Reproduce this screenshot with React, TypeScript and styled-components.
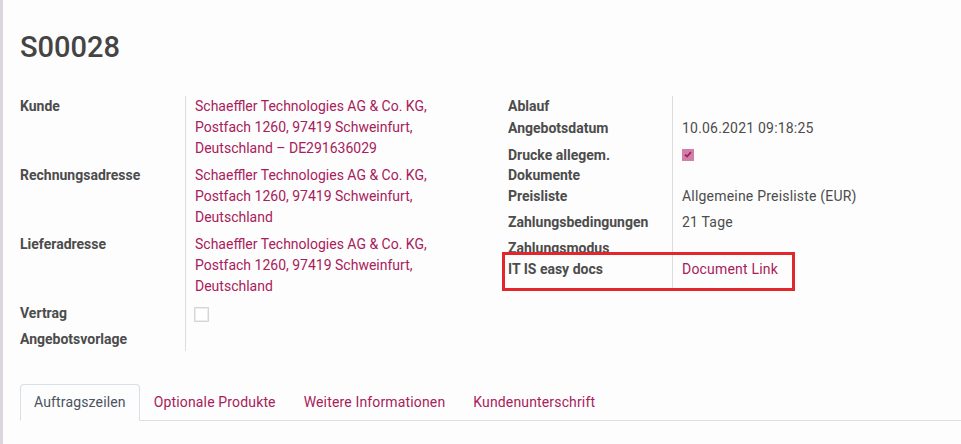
import React from 'react';
import styled, {createGlobalStyle} from 'styled-components';

const GlobalStyle = createGlobalStyle`
  html, body {
    margin: 0;
    padding: 0;
    background: #fdfdfd;
  }
  body {
    font-family: Roboto, "Noto Sans", "Liberation Sans", sans-serif;
    font-size: 14px;
    color: #4c4c4c;
  }
  * {
    box-sizing: border-box;
  }
`;

const LINK = '#a8205a';

const Sheet = styled.div`
  min-height: 444px;
  border-left: 3px solid #dbd6de;
  padding-left: 17px;
  overflow: hidden;
`;

const Title = styled.h1`
  margin: 29px 0 0;
  font-size: 29px;
  line-height: 36px;
  font-weight: 500;
  color: #444;
`;

const Groups = styled.div`
  display: grid;
  grid-template-columns: 488px 1fr;
  margin-top: 30.5px;
`;

const Group = styled.div`
  display: flex;
  flex-direction: column;
  line-height: 21px;
`;

const Row = styled.div<{ $label: number }>`
  display: grid;
  grid-template-columns: ${(p) => p.$label}px 1fr;
`;

const Label = styled.div<{ $pad?: number }>`
  font-weight: 700;
  color: #4c4c4c;
  padding-bottom: ${(p) => p.$pad ?? 5}px;
  white-space: nowrap;
`;

const Value = styled.div<{ $pad?: number }>`
  border-left: 1px solid #dcdcdc;
  padding-left: 9px;
  padding-bottom: ${(p) => p.$pad ?? 5}px;
  letter-spacing: 0.2px;
`;

const Link = styled.a`
  color: ${LINK};
  text-decoration: none;
  cursor: pointer;
`;

const AddressLink = styled(Link)`
  letter-spacing: 0;
`;

const Highlight = styled.div`
  position: relative;
  z-index: 1;
  display: grid;
  grid-template-columns: 167px 1fr;
  width: 293px;
  margin: -7.5px 0 0 -6px;
  border: 3px solid #e3262b;
  background: #fdfdfd;

  ${Label} {
    padding: 4px 0 8px 3px;
  }
  ${Value} {
    padding-top: 4px;
    padding-bottom: 8px;
  }
`;

const Check = styled.span<{ $checked?: boolean }>`
  display: inline-flex;
  align-items: center;
  justify-content: center;
  vertical-align: top;
  width: ${(p) => (p.$checked ? 12 : 15)}px;
  height: ${(p) => (p.$checked ? 12 : 15)}px;
  margin: ${(p) => (p.$checked ? '4px 0 0 0' : '3.5px 0 0 -1px')};
  background: ${(p) => (p.$checked ? '#cf7fa8' : '#fff')};
  border: 1px solid ${(p) => (p.$checked ? '#cf7fa8' : '#d6d6d6')};
  box-shadow: ${(p) => (p.$checked ? 'none' : 'inset 0 0 0 1px #ececec')};
`;

const Tabs = styled.ul`
  display: flex;
  list-style: none;
  margin: 33px 0 0;
  padding: 0;
  border-bottom: 1px solid #d8dfe6;
`;

const Tab = styled.li<{ $active?: boolean }>`
  margin-bottom: -1px;
  padding: 7px 13px;
  line-height: 21px;
  letter-spacing: 0.15px;
  border: 1px solid ${(p) => (p.$active ? '#d8dfe6' : 'transparent')};
  border-bottom-color: ${(p) => (p.$active ? '#fdfdfd' : 'transparent')};
  border-radius: 4px 4px 0 0;
  color: ${(p) => (p.$active ? '#4a5360' : LINK)};
  cursor: pointer;
`;

const address = (extra?: string) => (
  <AddressLink>
    Schaeffler Technologies AG &amp; Co. KG,
    <br />
    Postfach 1260, 97419 Schweinfurt,
    <br />
    Deutschland{extra}
  </AddressLink>
);

const tabs = ['Auftragszeilen', 'Optionale Produkte', 'Weitere Informationen', 'Kundenunterschrift'];

const App = () => {
  return (
    <>
      <GlobalStyle />
      <Sheet>
        <Title>S00028</Title>
        <Groups>
          <Group>
            <Row $label={165}>
              <Label $pad={6}>Kunde</Label>
              <Value $pad={6}>{address(' – DE291636029')}</Value>
            </Row>
            <Row $label={165}>
              <Label $pad={6}>Rechnungsadresse</Label>
              <Value $pad={6}>{address()}</Value>
            </Row>
            <Row $label={165}>
              <Label $pad={6.5}>Lieferadresse</Label>
              <Value $pad={6.5}>{address()}</Value>
            </Row>
            <Row $label={165}>
              <Label>Vertrag</Label>
              <Value>
                <Check />
              </Value>
            </Row>
            <Row $label={165}>
              <Label $pad={0.5}>Angebotsvorlage</Label>
              <Value $pad={0.5} />
            </Row>
          </Group>
          <Group>
            <Row $label={164}>
              <Label $pad={1}>Ablauf</Label>
              <Value $pad={1} />
            </Row>
            <Row $label={164}>
              <Label $pad={6}>Angebotsdatum</Label>
              <Value $pad={6}>10.06.2021 09:18:25</Value>
            </Row>
            <Row $label={164}>
              <Label $pad={1} style={{lineHeight: '20px'}}>
                Drucke allegem.
                <br />
                Dokumente
              </Label>
              <Value $pad={2}>
                <Check $checked>
                  <svg width="8" height="7" viewBox="0 0 8 7">
                    <path d="M1 3.6 L3 5.5 L7 1.2" fill="none" stroke="#a3205a" strokeWidth="1.8" />
                  </svg>
                </Check>
              </Value>
            </Row>
            <Row $label={164}>
              <Label>Preisliste</Label>
              <Value>Allgemeine Preisliste (EUR)</Value>
            </Row>
            <Row $label={164}>
              <Label>Zahlungsbedingungen</Label>
              <Value>21 Tage</Value>
            </Row>
            <Row $label={164}>
              <Label $pad={1}>Zahlungsmodus</Label>
              <Value $pad={1} />
            </Row>
            <Highlight>
              <Label>IT IS easy docs</Label>
              <Value>
                <Link>Document Link</Link>
              </Value>
            </Highlight>
          </Group>
        </Groups>
        <Tabs>
          {tabs.map((name, index) => (
            <Tab key={name} $active={index === 0}>
              {name}
            </Tab>
          ))}
        </Tabs>
      </Sheet>
    </>
  );
};

export default App;
